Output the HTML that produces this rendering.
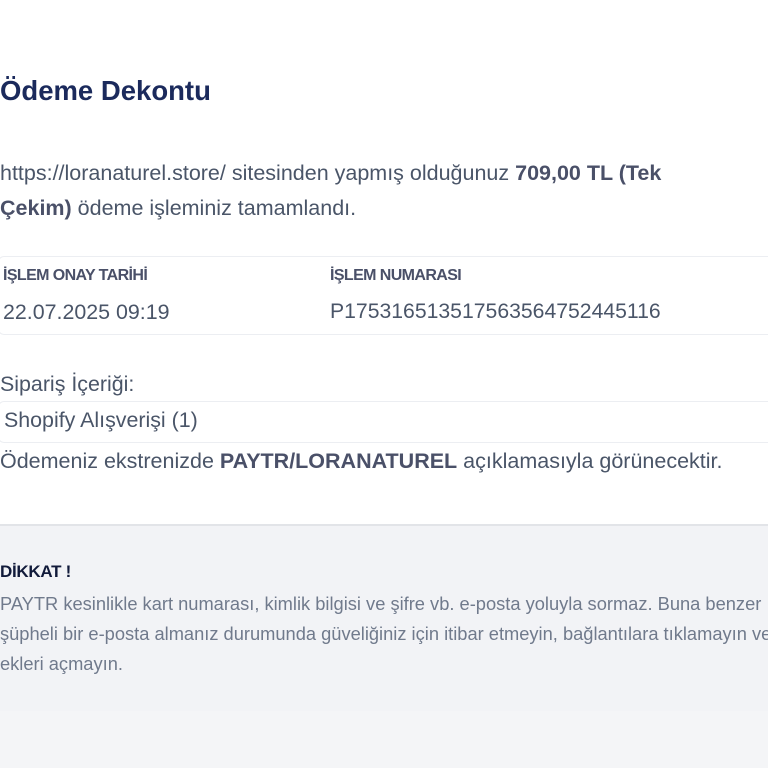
<!DOCTYPE html>
<html><head><meta charset="utf-8"><style>
body{margin:0;width:768px;height:768px;overflow:hidden;background:#fff;font-family:"Liberation Sans",Arial,sans-serif;color:#4a5568;position:relative}
.a{position:absolute;white-space:nowrap}
h1{position:absolute;left:0;top:75px;margin:0;font-size:27.5px;color:#1b2a5c;font-weight:bold}
.p{left:0;font-size:21.5px;line-height:35px}
b{color:#4a5068}
.box{position:absolute;left:-2px;width:800px;border:1px solid #eceef2;border-radius:6px}
.lbl{font-size:16px;font-weight:bold;letter-spacing:-0.6px;color:#4a5068}
.val{font-size:21.4px}
.gray{position:absolute;left:0;top:524px;width:768px;height:185px;background:#f2f3f6;border-top:2px solid #e2e4e8}
.g2{position:absolute;left:0;top:711px;width:768px;height:57px;background:#f4f5f7}
</style></head><body>
<h1>Ödeme Dekontu</h1>
<div class="a p" style="top:156px">https://loranaturel.store/ sitesinden yapmış olduğunuz <b>709,00 TL (Tek</b></div>
<div class="a p" style="top:191px"><b>Çekim)</b> ödeme işleminiz tamamlandı.</div>
<div class="box" style="top:256px;height:77px"></div>
<div class="a lbl" style="left:3px;top:267px">İŞLEM ONAY TARİHİ</div>
<div class="a lbl" style="left:330px;top:267px">İŞLEM NUMARASI</div>
<div class="a val" style="left:3px;top:300px">22.07.2025 09:19</div>
<div class="a val" style="left:330px;top:300px;font-size:21.2px">P175316513517563564752445116</div>
<div class="a val" style="left:0;top:372px">Sipariş İçeriği:</div>
<div class="box" style="top:401px;height:40px"></div>
<div class="a val" style="left:4px;top:408px">Shopify Alışverişi (1)</div>
<div class="a val" style="left:0;top:449px;font-size:21.5px">Ödemeniz ekstrenizde <b>PAYTR/LORANATUREL</b> açıklamasıyla görünecektir.</div>
<div class="gray"></div>
<div class="g2"></div>
<div class="a" style="left:0;top:562px;font-size:17px;font-weight:bold;color:#111a3a;letter-spacing:-0.3px">DİKKAT !</div>
<div class="a" style="left:0;top:589px;font-size:18.3px;line-height:30px;color:#707a8c">PAYTR kesinlikle kart numarası, kimlik bilgisi ve şifre vb. e-posta yoluyla sormaz. Buna benzer<br>şüpheli bir e-posta almanız durumunda güveliğiniz için itibar etmeyin, bağlantılara tıklamayın ve<br>ekleri açmayın.</div>
</body></html>
